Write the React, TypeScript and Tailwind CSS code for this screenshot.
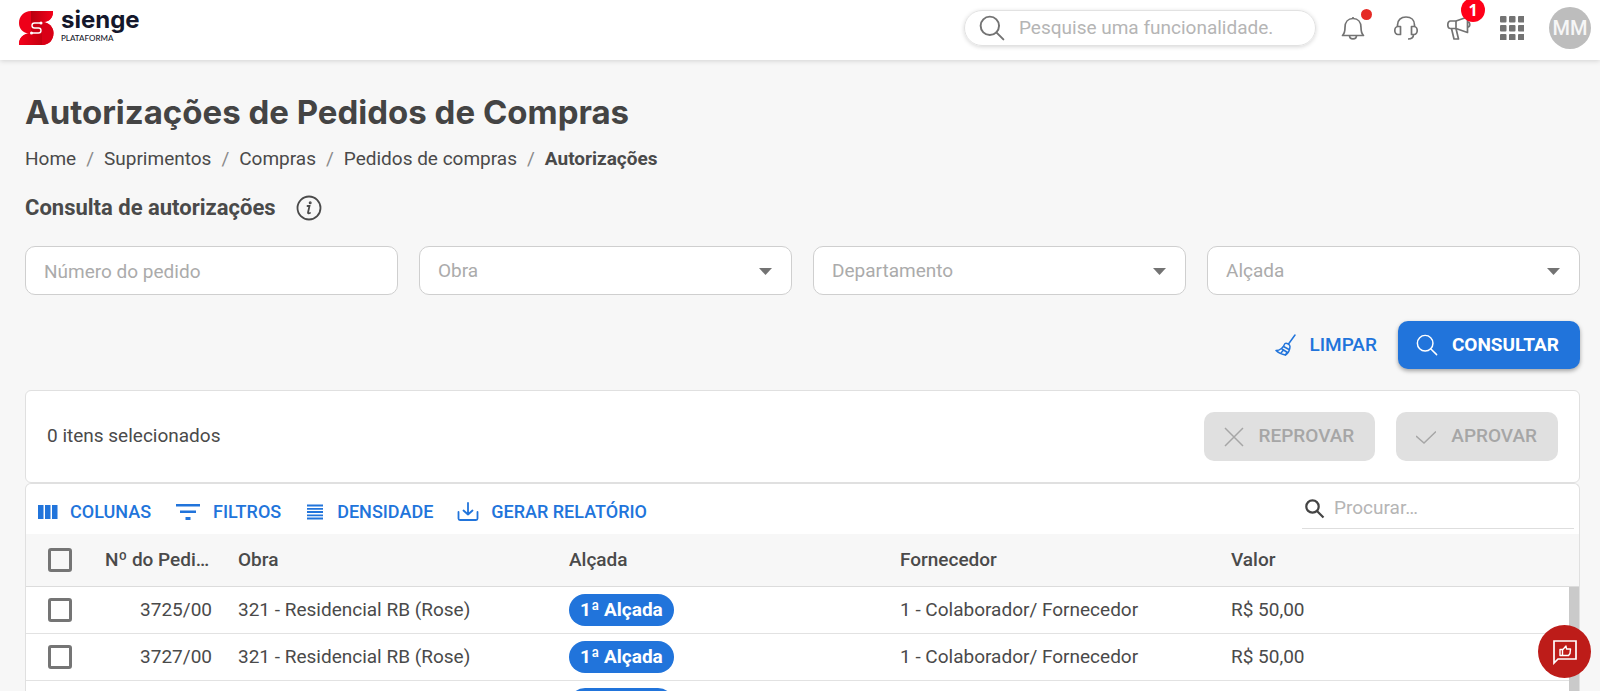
import type { ReactNode } from "react";

const breadcrumbs = ["Home", "Suprimentos", "Compras", "Pedidos de compras"];

const filters = ["Obra", "Departamento", "Alçada"];

const orders = [
  { id: "3725/00", site: "321 - Residencial RB (Rose)", level: "1ª Alçada", supplier: "1 - Colaborador/ Fornecedor", value: "R$ 50,00" },
  { id: "3727/00", site: "321 - Residencial RB (Rose)", level: "1ª Alçada", supplier: "1 - Colaborador/ Fornecedor", value: "R$ 50,00" },
  { id: "3728/00", site: "321 - Residencial RB (Rose)", level: "1ª Alçada", supplier: "1 - Colaborador/ Fornecedor", value: "R$ 50,00" },
];

function Logo() {
  return (
    <a href="#" className="flex items-start gap-[7px]" aria-label="Sienge Plataforma">
      <svg width="35" height="34" viewBox="0 0 35 34" className="mt-1">
        <defs>
          <linearGradient id="logo-top" x1="0" x2="1">
            <stop offset="0" stopColor="#b8000f" />
            <stop offset="1" stopColor="#f4001a" />
          </linearGradient>
          <linearGradient id="logo-bottom" x1="0" x2="1">
            <stop offset="0" stopColor="#f5001b" />
            <stop offset="1" stopColor="#c4000f" />
          </linearGradient>
        </defs>
        <path d="M12 0H34V1C34 7 30 11 24 11C30 12 34.500 16 34.500 22C34.500 29 30 34 23 34H0V33C0 27 4 23 10 22.500C4 22 0 18 0 12C0 5 5 0 12 0Z" fill="#ee0019" />
        <path d="M12 0H34V1C34 7 30 11 24 11H12Z" fill="url(#logo-top)" />
        <path d="M0 33C0 27 4 23 10 22.500H23V34H0Z" fill="url(#logo-bottom)" />
        <path d="M23 11C30 11 34.500 16 34.500 22C34.500 29 30 34 23 34Z" fill="#d90016" />
        <path d="M12 11H23V22.500H12Z" fill="#c90013" />
        <path d="M22 12H15.500A2.500 2.500 0 0 0 15.500 17H19.500A2.500 2.500 0 0 1 19.500 22H12.500" fill="none" stroke="#fff" strokeWidth="1.400" />
        <circle cx="22" cy="12" r="1.500" fill="#fff" />
        <circle cx="12.500" cy="22" r="1.500" fill="#fff" />
      </svg>
      <span className="flex flex-col text-[#14172b]">
        <span className="font-['Inter'] text-2xl leading-[25px] font-bold">sienge</span>
        <span className="font-['Lato'] text-[8px] leading-3 font-medium">PLATAFORMA</span>
      </span>
    </a>
  );
}

function SearchIcon({ size = 24, strokeWidth = 1.5 }: { size?: number; strokeWidth?: number }) {
  return (
    <svg width={size} height={size} viewBox="0 0 24 24" fill="none" stroke="currentColor" strokeWidth={strokeWidth}>
      <circle cx="10" cy="10" r="8.500" />
      <path d="M16 16L22.500 22.500" strokeLinecap="round" />
    </svg>
  );
}

function HeaderButton({ label, children }: { label: string; children: ReactNode }) {
  return (
    <button type="button" aria-label={label} className="relative flex size-6 items-center justify-center text-[#737373]">
      {children}
    </button>
  );
}

function Header() {
  return (
    <header className="relative z-10 flex h-[60px] shrink-0 items-start justify-between bg-white pr-[9px] pl-[19px] shadow-[0_1px_5px_rgba(0,0,0,0.15)]">
      <div className="pt-[7px]">
        <Logo />
      </div>
      <div className="flex items-center pt-[7px]">
        <label className="mr-[25px] flex h-9 w-[352px] items-center gap-[14px] rounded-full border border-[#e2e2e2] pr-4 pl-[14px] text-[#737373] shadow-[0_1px_4px_rgba(0,0,0,0.16)]">
          <SearchIcon size={26} strokeWidth={1.8} />
          <input
            type="search"
            aria-label="Pesquise uma funcionalidade"
            placeholder="Pesquise uma funcionalidade."
            className="min-w-0 flex-1 bg-transparent text-[19px] outline-none placeholder:text-[#b5b5b5]"
          />
        </label>
        <div className="flex items-center gap-[29px]">
          <HeaderButton label="Notificações">
            <svg width="24" height="24" viewBox="0 0 24 24" fill="none" stroke="currentColor" strokeWidth="1.700" strokeLinejoin="round">
              <path d="M12 1V2.500M1.500 19.500C3.500 17.500 4 15.500 4 11.500C4 6 7 2.500 12 2.500S20 6 20 11.500C20 15.500 20.500 17.500 22.500 19.500Z" />
              <path d="M8.500 19.500C8.500 24 15.500 24 15.500 19.500" />
            </svg>
            <span className="absolute -top-[7px] -right-[7px] size-[11px] rounded-full bg-[#e52a25]" />
          </HeaderButton>
          <HeaderButton label="Suporte">
            <svg width="24" height="24" viewBox="0 0 24 24" fill="none" stroke="currentColor" strokeWidth="1.700" strokeLinejoin="round">
              <path d="M3.500 11V9C3.500 4 7 1 12 1S20.500 4 20.500 9V11" />
              <path d="M6.500 10.500H4C2 10.500 .8 12.500 .8 14.500S2 18.500 4 18.500H6.500Z" />
              <path d="M17.500 10.500H20C22 10.500 23.200 12.500 23.200 14.500S22 18.500 20 18.500H17.500Z" />
              <path d="M19.500 18.500C19.500 21 17.500 23 14 23" />
            </svg>
          </HeaderButton>
          <HeaderButton label="Novidades">
            <svg width="24" height="24" viewBox="0 0 24 24" fill="none" stroke="currentColor" strokeWidth="1.700" strokeLinejoin="round">
              <path d="M9 5H3.500C2 5 .8 6.500 .8 8.800S2 12.500 3.500 12.500H9Z" />
              <path d="M9 5L20.500 1V16.500L9 12.500" />
              <path d="M20.500 6C23.500 6 23.500 11 20.500 11" />
              <path d="M4.500 12.500L7 23H11.500L9 12.500" />
            </svg>
            <span className="absolute -top-[18px] -right-[14px] flex size-6 items-center justify-center rounded-full bg-[#ff0019] font-['Open_Sans'] text-base leading-none font-bold text-white">
              1
            </span>
          </HeaderButton>
          <HeaderButton label="Aplicativos">
            <svg width="24" height="24" viewBox="0 0 24 24" fill="currentColor">
              {[0, 9, 18].map((y) => [0, 9, 18].map((x) => <rect key={`${x}-${y}`} x={x} y={y} width="6.500" height="6.500" rx="1" />))}
            </svg>
          </HeaderButton>
          <button type="button" className="-ml-1 flex size-[42px] items-center justify-center rounded-full bg-[#bdbdbd] text-xl font-medium text-[#f6f6f6]">
            MM
          </button>
        </div>
      </div>
    </header>
  );
}

function ToolbarButton({ icon, children }: { icon: ReactNode; children: ReactNode }) {
  return (
    <button type="button" className="flex items-center gap-3 text-lg font-medium text-[#2174db]">
      {icon}
      {children}
    </button>
  );
}

function Toolbar() {
  return (
    <div className="flex h-[50px] items-start justify-between pr-[5px] pl-3">
      <div className="flex items-center gap-6 pt-[14px]">
        <ToolbarButton
          icon={
            <svg width="20" height="24" viewBox="0 0 20 24" fill="currentColor">
              <path d="M0 5H5.500V19H0ZM7 5H12.500V19H7ZM14 5H19.500V19H14Z" />
            </svg>
          }
        >
          COLUNAS
        </ToolbarButton>
        <ToolbarButton
          icon={
            <svg width="26" height="24" viewBox="0 0 26 24" fill="currentColor">
              <path d="M1 4H25V6.500H1ZM5 10.500H21V13H5ZM10.500 17H15.500V20H10.500Z" />
            </svg>
          }
        >
          FILTROS
        </ToolbarButton>
        <ToolbarButton
          icon={
            <svg width="20" height="24" viewBox="0 0 20 24" fill="none" stroke="currentColor" strokeWidth="1.800">
              <path d="M2 5.500H18M2 8.800H18M2 12H18M2 15.300H18M2 18.500H18" />
            </svg>
          }
        >
          DENSIDADE
        </ToolbarButton>
        <ToolbarButton
          icon={
            <svg width="22" height="24" viewBox="0 0 22 24" fill="none" stroke="currentColor" strokeWidth="1.800" strokeLinecap="round" strokeLinejoin="round">
              <path d="M11 3V14.500M6.500 10.500L11 14.500L15.500 10.500" />
              <path d="M1.500 12V18.500C1.500 19.500 2 20 3 20H19C20 20 20.500 19.500 20.500 18.500V12" />
            </svg>
          }
        >
          GERAR RELATÓRIO
        </ToolbarButton>
      </div>
      <label className="flex h-[45px] w-[272px] items-center gap-[9px] border-b border-[#dedede] pt-[5px] pl-[3px] text-[#444]">
        <svg width="20" height="20" viewBox="0 0 20 20" fill="none" stroke="currentColor" strokeWidth="2.200">
          <circle cx="7.500" cy="7.500" r="6.200" />
          <path d="M12 12L18.500 18.500" />
        </svg>
        <input
          type="search"
          aria-label="Procurar"
          placeholder="Procurar…"
          className="min-w-0 flex-1 bg-transparent text-[19px] outline-none placeholder:text-[#b5b5b5]"
        />
      </label>
    </div>
  );
}

function Checkbox({ label }: { label: string }) {
  return (
    <input
      type="checkbox"
      aria-label={label}
      className="block size-6 appearance-none rounded-[3px] border-[3px] border-[#757575] bg-transparent checked:bg-[#2174db]"
    />
  );
}

function OrdersTable() {
  return (
    <table className="w-full table-fixed border-separate border-spacing-0 text-left text-[19px]">
      <colgroup>
        <col className="w-[66px]" />
        <col className="w-[134px]" />
        <col className="w-[331px]" />
        <col className="w-[331px]" />
        <col className="w-[331px]" />
        <col />
      </colgroup>
      <thead>
        <tr className="h-[53px] bg-[#f7f7f7] *:border-b *:border-[#dcdcdc] *:font-medium">
          <th className="pl-[22px]">
            <Checkbox label="Selecionar todos" />
          </th>
          <th className="truncate px-[13px]">Nº do Pedido</th>
          <th className="px-3">Obra</th>
          <th className="px-3">Alçada</th>
          <th className="px-3">Fornecedor</th>
          <th className="px-3">Valor</th>
        </tr>
      </thead>
      <tbody>
        {orders.map((order) => (
          <tr key={order.id} className="h-[47px] *:border-b *:border-[#e2e2e2]">
            <td className="pl-[22px]">
              <Checkbox label={`Selecionar pedido ${order.id}`} />
            </td>
            <td className="px-[14px] text-right">{order.id}</td>
            <td className="px-3">{order.site}</td>
            <td className="px-3">
              <span className="flex h-8 w-fit items-center rounded-full bg-[#2174db] px-[11px] font-bold text-white">{order.level}</span>
            </td>
            <td className="px-3">{order.supplier}</td>
            <td className="px-3">{order.value}</td>
          </tr>
        ))}
      </tbody>
    </table>
  );
}

export default function App() {
  return (
    <div className="flex h-screen flex-col overflow-hidden bg-[#f7f7f7] font-['Roboto',sans-serif] text-[#4a4a4a]">
      <Header />
      <main className="flex min-h-0 flex-1 flex-col pr-5 pl-[25px]">
        <h1 className="mt-8 font-['Inter'] text-[33px] leading-10 font-bold text-[#444]">Autorizações de Pedidos de Compras</h1>
        <nav aria-label="Trilha" className="mt-[15px]">
          <ol className="flex gap-[10px] text-[19px] leading-6">
            {breadcrumbs.map((item) => (
              <li key={item} className="flex gap-[10px]">
                <a href="#">{item}</a>
                <span className="text-[#8a8a8a]">/</span>
              </li>
            ))}
            <li className="font-bold">Autorizações</li>
          </ol>
        </nav>
        <div className="mt-[23px] flex items-center gap-5">
          <h2 className="text-[22px] leading-7 font-bold">Consulta de autorizações</h2>
          <svg width="26" height="26" viewBox="0 0 26 26" fill="none" stroke="currentColor" strokeWidth="1.800" strokeLinecap="round">
            <circle cx="13" cy="13" r="11.500" />
            <path d="M11.500 11H13.500L12 17.500Q12 19 14 18" />
            <circle cx="14.200" cy="7.800" r=".6" fill="currentColor" />
          </svg>
        </div>

        <form className="mt-6" onSubmit={(event) => event.preventDefault()}>
          <div className="grid grid-cols-4 gap-[21px] text-[19px]">
            <input
              type="text"
              aria-label="Número do pedido"
              placeholder="Número do pedido"
              className="h-[49px] min-w-0 rounded-[10px] border border-[#cfcfcf] bg-white px-[18px] pt-[2px] placeholder:text-[#ababab]"
            />
            {filters.map((filter) => (
              <div key={filter} className="relative">
                <select
                  aria-label={filter}
                  className="h-[49px] w-full appearance-none rounded-[10px] border border-[#cfcfcf] bg-white px-[18px] pt-[2px] text-[#ababab]"
                >
                  <option>{filter}</option>
                </select>
                <svg width="13" height="7" viewBox="0 0 13 7" className="pointer-events-none absolute top-[22px] right-5 fill-[#737373]">
                  <path d="M0 0H13L6.500 7Z" />
                </svg>
              </div>
            ))}
          </div>
          <div className="mt-[26px] flex justify-end gap-[21px] text-[19px] font-medium">
            <button type="reset" className="flex items-center gap-3 text-[#2174db]">
              <svg width="22" height="22" viewBox="0 0 22 22" fill="none" stroke="currentColor" strokeWidth="1.500" strokeLinecap="round" strokeLinejoin="round">
                <path d="M20 1L13.500 10" />
                <path d="M10 9.500C11.500 8.500 15 10.500 15 12.500C15 16 13 20 10.500 21C7 20.500 3 18.500 1 16.500C5 16.500 8.500 13 10 9.500Z" />
                <path d="M8.500 12.500L14 15.500M7 15L12.500 18.500M6 19L8 16.500M10.500 21L12 18" />
              </svg>
              LIMPAR
            </button>
            <button type="submit" className="flex h-12 items-center gap-[14px] rounded-[10px] bg-[#2174db] pr-[21px] pl-[18px] font-bold text-white shadow-[0_2px_4px_rgba(0,0,0,0.35)]">
              <SearchIcon size={22} strokeWidth={1.6} />
              CONSULTAR
            </button>
          </div>
        </form>

        <section className="mt-[21px] flex h-[93px] shrink-0 items-center justify-between rounded-md border border-[#e0e0e0] bg-white px-[21px]">
          <p className="text-[19px]">0 itens selecionados</p>
          <div className="flex gap-[21px] text-[19px] font-medium text-[#a6a6a6]">
            <button type="button" disabled className="flex h-[49px] items-center gap-[15px] rounded-[10px] bg-[#e0e0e0] pr-[21px] pl-5">
              <svg width="20" height="20" viewBox="0 0 20 20" fill="none" stroke="currentColor" strokeWidth="1.500">
                <path d="M1 1L19 19M19 1L1 19" />
              </svg>
              REPROVAR
            </button>
            <button type="button" disabled className="flex h-[49px] items-center gap-[15px] rounded-[10px] bg-[#e0e0e0] pr-[21px] pl-5">
              <svg width="20" height="20" viewBox="0 0 20 20" fill="none" stroke="currentColor" strokeWidth="1.500">
                <path d="M0 9L8 16L20 4.500" />
              </svg>
              APROVAR
            </button>
          </div>
        </section>

        <section className="relative min-h-0 flex-1 overflow-hidden rounded-t-md border border-b-0 border-[#e0e0e0] bg-white">
          <Toolbar />
          <OrdersTable />
          <div className="absolute top-[103px] right-0 bottom-0 w-[10px] bg-[#cacaca]" />
        </section>
      </main>

      <button type="button" aria-label="Enviar feedback" className="fixed right-[9px] bottom-[13px] z-20 flex size-[53px] items-center justify-center rounded-full bg-[#bd1c19] text-white">
        <svg width="26" height="26" viewBox="0 0 26 26" fill="none" stroke="currentColor" strokeWidth="1.700">
          <path d="M2 2H24V20H6L2 24Z" />
          <path d="M8 10.500H10.500V16.500H8ZM10.500 11L14 7L14.500 10H18.500L18 14.500L16.500 16.500H10.500" strokeWidth="1.400" strokeLinejoin="round" />
        </svg>
      </button>
    </div>
  );
}
